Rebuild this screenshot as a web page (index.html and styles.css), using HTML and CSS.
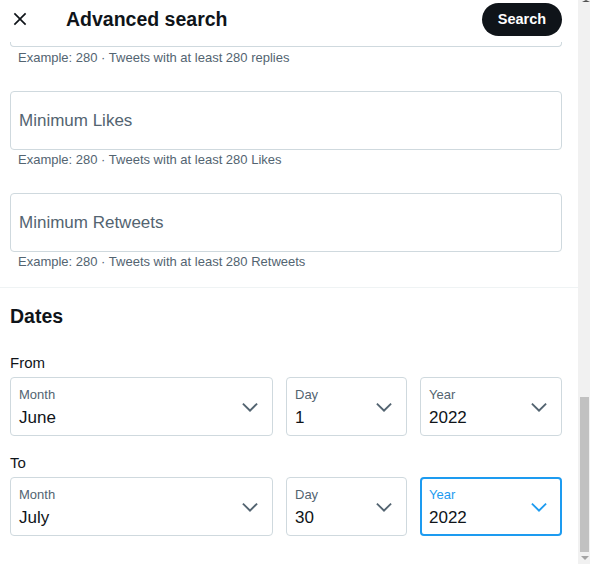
FILE: index.html
```html
<!DOCTYPE html>
<html>
<head>
<meta charset="utf-8">
<link rel="stylesheet" href="styles.css">
</head>
<body>
<div class="window">
  <main class="page">
    <header class="header">
      <button class="close" aria-label="Close">
        <svg viewBox="0 0 24 24"><path d="M10.59 12L4.54 5.96l1.42-1.42L12 10.59l6.04-6.05 1.42 1.42L13.41 12l6.05 6.04-1.42 1.42L12 13.41l-6.04 6.05-1.42-1.42L10.59 12z"/></svg>
      </button>
      <h1 class="title">Advanced search</h1>
      <button class="search-btn">Search</button>
    </header>
    <div class="field-fragment"></div>
    <p class="hint">Example: 280 · Tweets with at least 280 replies</p>

    <div class="field">Minimum Likes</div>
    <p class="hint">Example: 280 · Tweets with at least 280 Likes</p>

    <div class="field">Minimum Retweets</div>
    <p class="hint">Example: 280 · Tweets with at least 280 Retweets</p>

    <section class="dates">
      <h2 class="section-title">Dates</h2>
      <div class="range-label">From</div>
      <div class="select-row">
        <div class="select">
          <div class="select-text"><span class="select-label">Month</span><span class="select-value">June</span></div>
          <svg class="chev" viewBox="0 0 24 24"><path d="M3.543 8.96l1.414-1.42L12 14.59l7.043-7.050 1.414 1.42L12 17.41 3.543 8.96z"/></svg>
        </div>
        <div class="select">
          <div class="select-text"><span class="select-label">Day</span><span class="select-value">1</span></div>
          <svg class="chev" viewBox="0 0 24 24"><path d="M3.543 8.96l1.414-1.42L12 14.59l7.043-7.05 1.414 1.42L12 17.41 3.543 8.96z"/></svg>
        </div>
        <div class="select">
          <div class="select-text"><span class="select-label">Year</span><span class="select-value">2022</span></div>
          <svg class="chev" viewBox="0 0 24 24"><path d="M3.543 8.96l1.414-1.42L12 14.59l7.043-7.05 1.414 1.42L12 17.41 3.543 8.96z"/></svg>
        </div>
      </div>
      <div class="range-label to">To</div>
      <div class="select-row">
        <div class="select">
          <div class="select-text"><span class="select-label">Month</span><span class="select-value">July</span></div>
          <svg class="chev" viewBox="0 0 24 24"><path d="M3.543 8.96l1.414-1.42L12 14.59l7.043-7.05 1.414 1.42L12 17.41 3.543 8.96z"/></svg>
        </div>
        <div class="select">
          <div class="select-text"><span class="select-label">Day</span><span class="select-value">30</span></div>
          <svg class="chev" viewBox="0 0 24 24"><path d="M3.543 8.96l1.414-1.42L12 14.59l7.043-7.05 1.414 1.42L12 17.41 3.543 8.96z"/></svg>
        </div>
        <div class="select focused">
          <div class="select-text"><span class="select-label">Year</span><span class="select-value">2022</span></div>
          <svg class="chev" viewBox="0 0 24 24"><path d="M3.543 8.96l1.414-1.42L12 14.59l7.043-7.05 1.414 1.42L12 17.41 3.543 8.96z"/></svg>
        </div>
      </div>
    </section>
  </main>
  <div class="scrollbar">
    <div class="arrow-up"></div>
    <div class="track-space"></div>
    <div class="thumb"></div>
    <div class="arrow-down"></div>
  </div>
</div>
</body>
</html>
```
FILE: styles.css
```css
* { box-sizing: border-box; }
html, body { margin: 0; padding: 0; background: #fff; }
body {
  font-family: "Liberation Sans", Arial, sans-serif;
  color: #0f1419;
}
.window {
  display: flex;
  width: 590px;
  height: 564px;
  overflow: hidden;
}
.page {
  width: 578px;
  flex: none;
  height: 564px;
  overflow: hidden;
}
.header {
  height: 42px;
  display: flex;
  align-items: center;
  padding: 0 16px 4px 10px;
}
.close {
  width: 20px;
  height: 20px;
  padding: 0;
  border: 0;
  background: none;
  display: flex;
}
.close svg { width: 20px; height: 20px; fill: #0f1419; }
.title {
  margin: 0 0 0 36px;
  font-size: 19.5px;
  font-weight: 700;
  line-height: 24px;
  flex: 1;
}
.search-btn {
  height: 33px;
  width: 80px;
  border: 0;
  border-radius: 17px;
  background: #0f1419;
  color: #fff;
  font-family: inherit;
  font-weight: 700;
  font-size: 14.5px;
}
.field-fragment {
  margin: 0 16px 0 10px;
  height: 5px;
  border: 1px solid #cfd9de;
  border-top: 0;
  border-radius: 0 0 4px 4px;
}
.hint {
  margin: 3px 0 0;
  padding-left: 18px;
  font-size: 13px;
  line-height: 16px;
  color: #536471;
}
.field {
  margin: 25px 16px 0 10px;
  height: 59px;
  border: 1px solid #cfd9de;
  border-radius: 4px;
  padding-left: 8px;
  display: flex;
  align-items: center;
  font-size: 17px;
  color: #536471;
}
.hint + .field { margin-top: 25px; }
.field + .hint { margin-top: 2px; }
.dates {
  margin-top: 17px;
  border-top: 1px solid #eff3f4;
  padding: 0 16px 0 10px;
}
.section-title {
  margin: 16px 0 0;
  font-size: 19.5px;
  font-weight: 700;
  line-height: 24px;
}
.range-label {
  margin-top: 25px;
  font-size: 15px;
  line-height: 20px;
}
.range-label.to { margin-top: 17px; }
.select-row {
  margin-top: 4px;
  display: grid;
  grid-template-columns: 263px 121px 1fr;
  column-gap: 13px;
}
.select {
  height: 59px;
  border: 1px solid #cfd9de;
  border-radius: 4px;
  display: flex;
  align-items: center;
  padding: 0 11px 0 8px;
}
.select-text {
  flex: 1;
  display: flex;
  flex-direction: column;
  align-self: flex-start;
  padding-top: 9px;
}
.select-label {
  font-size: 13px;
  line-height: 16px;
  color: #536471;
}
.select-value {
  margin-top: 4px;
  font-size: 17px;
  line-height: 22px;
}
.chev { width: 22px; height: 22px; fill: #536471; flex: none; }
.select.focused {
  border: 2px solid #1d9bf0;
  padding: 0 10px 0 7px;
}
.select.focused .select-text { padding-top: 8px; }
.select.focused .select-label { color: #1d9bf0; }
.select.focused .chev { fill: #1d9bf0; }

.scrollbar {
  width: 12px;
  flex: none;
  background: #f1f1f1;
  display: flex;
  flex-direction: column;
  align-items: center;
}
.arrow-up {
  width: 0; height: 0;
  border-left: 4px solid transparent;
  border-right: 4px solid transparent;
  border-bottom: 2px solid #505050;
  margin-left: 3px;
}
.track-space { height: 395px; }
.thumb {
  width: 9px;
  height: 155px;
  background: #c1c1c1;
  margin-left: 1px;
}
.arrow-down {
  margin-top: 4px;
  width: 0; height: 0;
  border-left: 4px solid transparent;
  border-right: 4px solid transparent;
  border-top: 4px solid #a3a3a3;
  margin-left: 1px;
}
```
